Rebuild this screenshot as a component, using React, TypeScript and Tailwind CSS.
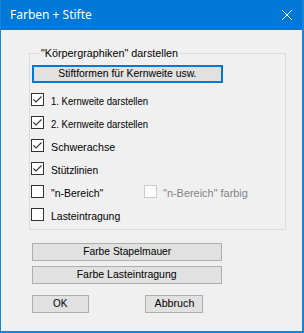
import React from "react";

const FONT = { fontFamily: '"Liberation Sans", Arial, sans-serif' };

function Check({ checked, disabled }: { checked?: boolean; disabled?: boolean }) {
  return (
    <div
      className={
        "w-[13px] h-[13px] shrink-0 border flex items-center justify-center " +
        (disabled ? "border-[#cccccc] bg-[#ffffff]" : "border-[#333333] bg-white")
      }
    >
      {checked && (
        <svg width="11" height="11" viewBox="0 0 11 11">
          <path d="M1.5 5.5 L4 8 L9.5 2.5" fill="none" stroke="#333333" strokeWidth="1.1" />
        </svg>
      )}
    </div>
  );
}

function Txt({ children, className = "" }: { children: React.ReactNode; className?: string }) {
  return (
    <span className={"inline-block whitespace-nowrap text-[11.5px] leading-none " + className}>
      {children}
    </span>
  );
}

function Row({ label, sx, checked, children }: { label: string; sx: string; checked?: boolean; children?: React.ReactNode }) {
  return (
    <div className="h-[23px] flex items-center">
      <Check checked={checked} />
      <div className="ml-[7px] w-[93px]">
        <Txt className={"origin-left text-black " + sx}>{label}</Txt>
      </div>
      {children}
    </div>
  );
}

function Btn({ label, w, sx, focused }: { label: string; w: string; sx: string; focused?: boolean }) {
  return (
    <div
      className={
        "h-[18px] flex items-center justify-center bg-[#e1e1e1] text-black " +
        w +
        (focused ? " border-2 border-[#0078d7]" : " border border-[#adadad]")
      }
    >
      <Txt className={"origin-center " + sx}>{label}</Txt>
    </div>
  );
}

export default function App() {
  return (
    <div className="w-[304px] h-[333px] flex flex-col bg-[#f0f0f0] border-l border-r-2 border-b-2 border-[#1883d7]" style={FONT}>
      <div className="h-[30px] bg-[#0078d7] flex items-center justify-between pl-[9px] pr-[10px] shrink-0">
        <span className="text-white text-[12px]" style={{ fontFamily: '"Noto Sans", "Open Sans", sans-serif' }}>
          Farben + Stifte
        </span>
        <svg width="10" height="10" viewBox="0 0 10 10">
          <path d="M0 0 L10 10 M10 0 L0 10" stroke="#ffffff" strokeWidth="1" />
        </svg>
      </div>
      <div className="flex flex-col pl-[28px] pt-[23px]">
        <div className="relative w-[257px] h-[177px] border border-[#dcdcdc] pt-[11px] pl-px">
          <div className="absolute -top-[7px] left-[10px] px-px bg-[#f0f0f0] w-[140px] h-[13px] flex items-center">
            <Txt className="origin-left text-black scale-x-[0.937]">"Körpergraphiken" darstellen</Txt>
          </div>
          <div className="ml-px">
            <Btn label="Stiftformen für Kernweite usw." w="w-[191px]" sx="scale-x-[0.905]" focused />
          </div>
          <div className="flex flex-col mt-[5px]">
            <Row label="1. Kernweite darstellen" sx="scale-x-[0.83]" checked />
            <Row label="2. Kernweite darstellen" sx="scale-x-[0.83]" checked />
            <Row label="Schwerachse" sx="scale-x-[0.93]" checked />
            <Row label="Stützlinien" sx="scale-x-[0.89]" checked />
            <Row label={'"n-Bereich"'} sx="scale-x-[0.91]">
              <div className="flex items-center">
                <Check disabled />
                <div className="ml-[6px]">
                  <Txt className="origin-left text-[#838383] scale-x-[0.95]">"n-Bereich" farbig</Txt>
                </div>
              </div>
            </Row>
            <Row label="Lasteintragung" sx="scale-x-[0.91]" />
          </div>
        </div>
        <div className="flex flex-col gap-[5px] mt-[13px] ml-[3px]">
          <Btn label="Farbe Stapelmauer" w="w-[190px]" sx="scale-x-[0.895]" />
          <Btn label="Farbe Lasteintragung" w="w-[190px]" sx="scale-x-[0.915]" />
        </div>
        <div className="flex mt-[11px] ml-[3px]">
          <Btn label="OK" w="w-[57px]" sx="scale-x-[0.87]" />
          <div className="ml-[56px]">
            <Btn label="Abbruch" w="w-[58px]" sx="scale-x-[0.93]" />
          </div>
        </div>
      </div>
    </div>
  );
}
